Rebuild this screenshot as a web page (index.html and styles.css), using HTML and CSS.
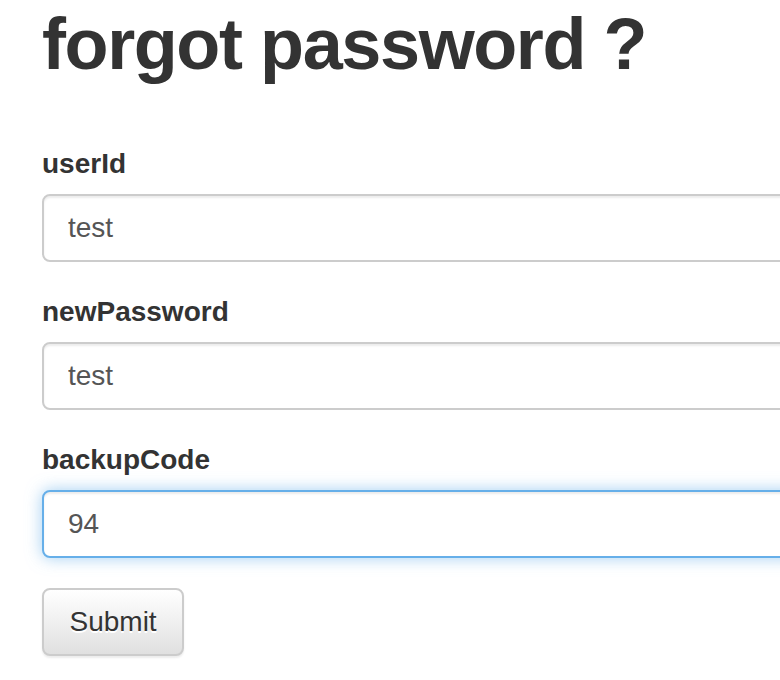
FILE: index.html
```html
<!DOCTYPE html>
<html>
<head>
<meta charset="utf-8">
<link rel="stylesheet" href="styles.css">
</head>
<body>
<div class="page">
  <h1 class="title">forgot password ?</h1>
  <form class="form">
    <div class="group">
      <label class="label">userId</label>
      <input class="input" type="text" value="test">
    </div>
    <div class="group">
      <label class="label">newPassword</label>
      <input class="input" type="text" value="test">
    </div>
    <div class="group">
      <label class="label">backupCode</label>
      <input class="input input-focus" type="text" value="94">
    </div>
    <button class="btn" type="button">Submit</button>
  </form>
  <a class="back" href="#">Back</a>
</div>
</body>
</html>
```
FILE: styles.css
```css
html, body {
  margin: 0;
  padding: 0;
  background: #fff;
  overflow: hidden;
}
body {
  font-family: "Liberation Sans", Arial, Helvetica, sans-serif;
  color: #333;
  font-size: 28px;
  line-height: 40px;
}
.page {
  padding-left: 42px;
  width: 820px;
}
.title {
  margin: 5px 0 60px 0;
  font-size: 72px;
  line-height: 79px;
  font-weight: bold;
  letter-spacing: -1.4px;
  color: #333;
}
.form {
  margin: 0;
}
.group {
  display: flex;
  flex-direction: column;
  margin-bottom: 30px;
}
.label {
  font-weight: bold;
  font-size: 28px;
  line-height: 40px;
  margin-bottom: 10px;
  color: #333;
}
.input {
  box-sizing: border-box;
  display: block;
  width: 100%;
  height: 68px;
  padding: 12px 24px;
  font-family: "Liberation Sans", Arial, Helvetica, sans-serif;
  font-size: 28px;
  line-height: 40px;
  color: #555;
  background: #fff;
  border: 2px solid #ccc;
  border-radius: 8px;
  box-shadow: inset 0 2px 2px rgba(0,0,0,.075);
  outline: none;
}
.input-focus {
  border-color: #66afe9;
  box-shadow: inset 0 2px 2px rgba(0,0,0,.075), 0 0 16px rgba(102,175,233,.6);
}
.btn {
  display: block;
  box-sizing: border-box;
  height: 68px;
  padding: 12px 25.5px;
  font-family: "Liberation Sans", Arial, Helvetica, sans-serif;
  font-size: 28px;
  line-height: 40px;
  color: #333;
  background-image: linear-gradient(to bottom, #fff 0, #e0e0e0 100%);
  border: 2px solid #ccc;
  border-radius: 8px;
  text-shadow: 0 2px 0 #fff;
  box-shadow: inset 0 2px 0 rgba(255,255,255,.15), 0 2px 2px rgba(0,0,0,.075);
  margin-top: 0;
}
.back {
  display: block;
  margin-top: 16px;
  margin-left: -4px;
  color: #a9b8c8;
  text-decoration: none;
  font-size: 28px;
  line-height: 40px;
}
```
